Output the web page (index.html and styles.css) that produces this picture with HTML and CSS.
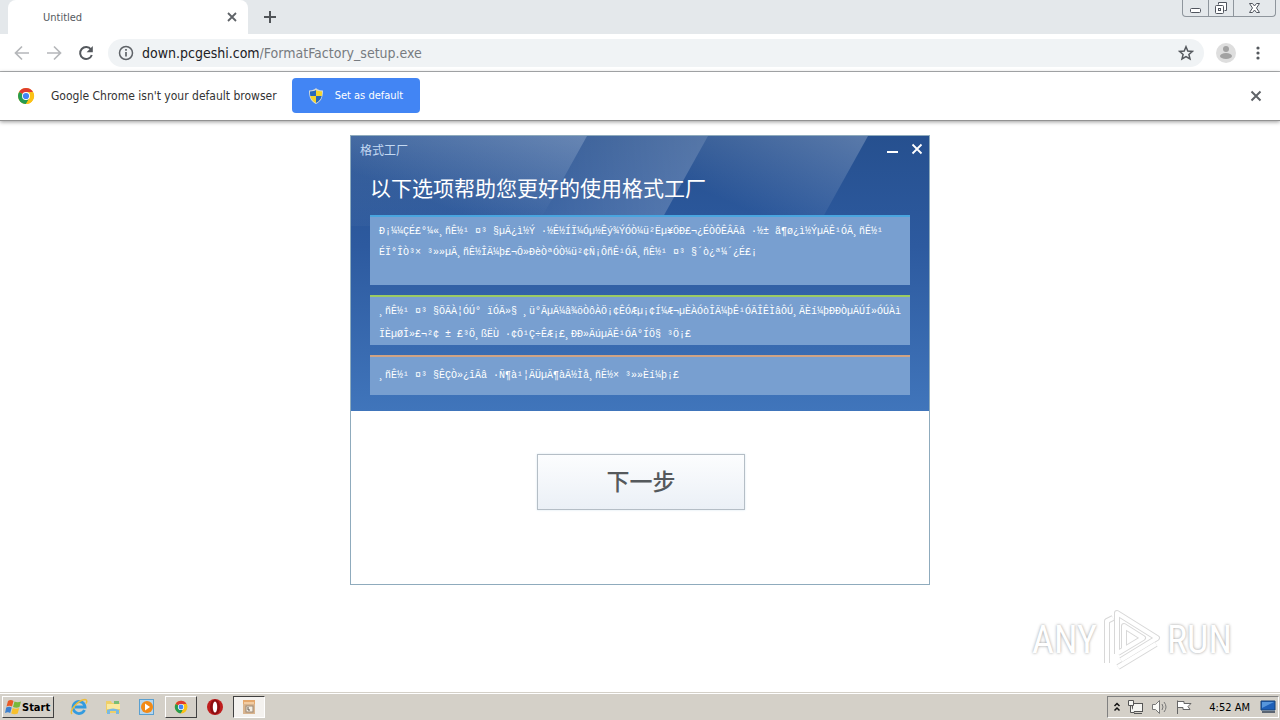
FILE: index.html
```html
<!DOCTYPE html>
<html lang="en">
<head>
    <meta charset="UTF-8">
    <meta name="viewport" content="width=device-width, initial-scale=1.0">
    <title>Untitled</title>
    <link rel="stylesheet" href="styles.css">
</head>
<body>
    <header class="browser">
        <div class="tab-strip">
            <div class="tab">
                <span class="tab-title">Untitled</span>
                <button class="icon-button" aria-label="Close tab">
                    <svg width="10" height="10" viewBox="0 0 10 10"><path d="M1 1l8 8M9 1L1 9" stroke="#5f6368" stroke-width="1.8"/></svg>
                </button>
            </div>
            <button class="icon-button new-tab" aria-label="New tab">
                <svg width="12" height="12" viewBox="0 0 12 12"><path d="M6 0v12M0 6h12" stroke="#505458" stroke-width="2"/></svg>
            </button>
            <div class="window-buttons">
                <button aria-label="Minimize window">
                    <svg width="13" height="16" viewBox="0 0 13 16"><rect x="1.5" y="8.5" width="10" height="4" rx="1" fill="#fff" stroke="#50555e"/></svg>
                </button>
                <button aria-label="Restore window">
                    <svg width="14" height="16" viewBox="0 0 14 16"><path d="M4.5 4.5v-2h8v8h-2" fill="#fff" stroke="#50555e"/><rect x="1.5" y="5.5" width="8" height="8" rx="1" fill="#fff" stroke="#50555e"/><rect x="4.5" y="8.5" width="2" height="2" fill="none" stroke="#50555e"/></svg>
                </button>
                <button class="wide" aria-label="Close window">
                    <svg width="13" height="16" viewBox="0 0 13 16"><path d="M1.5 3.500h3l2 2.500 2-2.500h3L8.500 8l3 4.500h-3l-2-2.500-2 2.500h-3L4.500 8z" fill="#fff" stroke="#50555e"/></svg>
                </button>
            </div>
        </div>

        <div class="toolbar">
            <button class="icon-button" aria-label="Back">
                <svg width="16" height="16" viewBox="0 0 16 16"><path d="M15 8H2M8 1.500L1.500 8 8 14.500" fill="none" stroke="#b5b7ba" stroke-width="1.7"/></svg>
            </button>
            <button class="icon-button" aria-label="Forward">
                <svg width="16" height="16" viewBox="0 0 16 16"><path d="M1 8h13M8 1.500L14.500 8 8 14.500" fill="none" stroke="#b5b7ba" stroke-width="1.7"/></svg>
            </button>
            <button class="icon-button" aria-label="Reload">
                <svg width="16" height="16" viewBox="0 0 16 16"><path d="M13 4.500A6 6 0 1 0 13.800 10" fill="none" stroke="#55595e" stroke-width="2"/><path d="M14.800 1v6.200H8.600z" fill="#55595e"/></svg>
            </button>
            <div class="address">
                <svg width="16" height="16" viewBox="0 0 16 16"><circle cx="8" cy="8" r="6.5" fill="none" stroke="#5f6368" stroke-width="1.5"/><path d="M8 7v4.500M8 4v1.700" stroke="#5f6368" stroke-width="1.7"/></svg>
                <label class="host" for="url">down.pcgeshi.com</label>
                <input class="path" id="url" type="text" value="/FormatFactory_setup.exe">
                <button class="icon-button" aria-label="Bookmark this page">
                    <svg width="16" height="16" viewBox="0 0 16 16"><path d="M8 1.700l1.800 4.300 4.600.4-3.500 3 1.100 4.500L8 11.500l-4 2.400 1.100-4.500-3.500-3 4.600-.4z" fill="none" stroke="#55595e" stroke-width="1.5"/></svg>
                </button>
            </div>
            <button class="icon-button profile" aria-label="Profile">
                <svg width="20" height="20" viewBox="0 0 20 20"><circle cx="10" cy="10" r="10" fill="#dedede"/><circle cx="10" cy="6" r="3" fill="#a2a2a2"/><ellipse cx="10" cy="13" rx="6" ry="3" fill="#a2a2a2"/></svg>
            </button>
            <button class="icon-button menu" aria-label="Menu">
                <svg width="4" height="14" viewBox="0 0 4 14" fill="#55595e"><circle cx="2" cy="2" r="1.6"/><circle cx="2" cy="7" r="1.6"/><circle cx="2" cy="12" r="1.6"/></svg>
            </button>
        </div>

        <div class="infobar">
            <svg width="18" height="18" viewBox="0 0 18 18"><use href="#chrome"/></svg>
            <span class="infobar-text">Google Chrome isn't your default browser</span>
            <button class="set-default">
                <svg width="14" height="16" viewBox="0 0 14 16"><path d="M7 0l1 1c2 1 4 1.500 6 1.500 0 7-2 11-7 13.500C2 13.500 0 9.500 0 2.500 2 2.500 4 2 6 1z" fill="#d6dbd5"/><path d="M7 2v6H1.300c-.3-1.300-.4-3-.3-4.500C3.500 3.400 5.500 3 7 2z" fill="#2868ba"/><path d="M7 2v6h5.700c.3-1.300.4-3 .3-4.500C10.500 3.400 8.500 3 7 2z" fill="#f4d52b"/><path d="M7 8v7c-3-1.500-5-4-5.700-7z" fill="#f4d52b"/><path d="M7 8v7c3-1.500 5-4 5.700-7z" fill="#2868ba"/></svg>
                Set as default
            </button>
            <button class="icon-button dismiss" aria-label="Dismiss">
                <svg width="12" height="12" viewBox="0 0 12 12"><path d="M1.500 1.500l9 9M10.500 1.500l-9 9" stroke="#5f6368" stroke-width="2"/></svg>
            </button>
        </div>
    </header>

    <main class="page">
        <section class="installer" lang="zh">
            <div class="hero">
                <svg class="rays" viewBox="0 0 578 275" preserveAspectRatio="none">
                    <defs>
                        <linearGradient id="ray" x1="0" y1="1" x2="1" y2="0">
                            <stop offset="0.3" stop-color="#fff" stop-opacity="0"/>
                            <stop offset="1" stop-color="#fff" stop-opacity="0.24"/>
                        </linearGradient>
                        <linearGradient id="haze" x1="0" y1="0" x2="1" y2="0">
                            <stop offset="0" stop-color="#fff" stop-opacity="0.08"/>
                            <stop offset="1" stop-color="#fff" stop-opacity="0.22"/>
                        </linearGradient>
                        <linearGradient id="shade" x1="0" y1="0" x2="0" y2="1">
                            <stop offset="0" stop-color="#4a70a8" stop-opacity="0.5"/>
                            <stop offset="1" stop-color="#4a70a8" stop-opacity="0.2"/>
                        </linearGradient>
                    </defs>
                    <path d="M0 0h236l-50 90H0z" fill="url(#shade)"/>
                    <path d="M0 0h236l-50 90H0z" fill="url(#ray)"/>
                    <path d="M236 0h121l-50 90H186z" fill="url(#haze)"/>
                    <path d="M357 0h160l-50 90H307z" fill="url(#ray)"/>
                </svg>
                <div class="title-bar">
                    <span class="title">格式工厂</span>
                    <button class="icon-button" aria-label="最小化">
                        <svg width="12" height="12" viewBox="0 0 12 12"><path d="M1 9h11" stroke="#fff" stroke-width="2"/></svg>
                    </button>
                    <button class="icon-button" aria-label="关闭">
                        <svg width="12" height="12" viewBox="0 0 12 12"><path d="M1.500 1.500l9 9M10.500 1.500l-9 9" stroke="#fff" stroke-width="1.8"/></svg>
                    </button>
                </div>
                <h1>以下选项帮助您更好的使用格式工厂</h1>
                <div class="option blue">
                    <p>Ð¡¼¼ÇÉ£°¼«¸ñÊ½¹ ¤³ §µÄ¿ì½Ý ·½Ê½ÍÏ¼Óµ½Êý¾ÝÓÒ¼ü²Ëµ¥ÖÐ£¬¿ÉÒÔÊÂÃâ ·½± ã¶ø¿ì½ÝµÄÊ¹ÓÃ¸ñÊ½¹</p>
                    <p>ÉÏ°ÎÒ³× ³»»µÄ¸ñÊ½ÎÄ¼þ£¬Õ»ÐèÒªÓÒ¼ü²¢Ñ¡ÔñÊ¹ÓÃ¸ñÊ½¹ ¤³ §´ò¿ª¼´¿É£¡</p>
                </div>
                <div class="option green">
                    <p>¸ñÊ½¹ ¤³ §ÕÃÀ¦ÓÚ° ïÓÃ»§ ¸ü°ÃµÄ¼â¾öÒôÀÖ¡¢ÊÓÆµ¡¢Í¼Æ¬µÈÀ­ÓòÎÄ¼þÊ¹ÓÃÎÊÌâÔÚ¸ÃÈí¼þÐÐÒµÄÚÍ»ÓÚÀì</p>
                    <p>ÏÈµØÎ»£¬²¢ ± £³Ö¸ßËÙ ·¢Õ¹Ç÷ÊÆ¡£¸ÐÐ»ÄúµÄÊ¹ÓÃ°ÍÖ§ ³Ö¡£</p>
                </div>
                <div class="option orange">
                    <p>¸ñÊ½¹ ¤³ §ÊÇÒ»¿îÃâ ·Ñ¶à¹¦ÄÜµÄ¶àÃ½Ìå¸ñÊ½× ³»»Èí¼þ¡£</p>
                </div>
            </div>
            <div class="actions">
                <button class="next">下一步</button>
            </div>
        </section>
        <div class="watermark">
            <span>ANY</span>
            <svg width="58" height="62" viewBox="0 0 58 62" fill="none" stroke-linejoin="round"><g stroke="#d8d8d8" stroke-width="6"><path d="M4 54V12l6-3M14 45V4l40 25-36 22"/><path d="M21 40V17l19 12-25 15M15 58l38-23"/></g><g stroke="#fff" stroke-width="4"><path d="M4 54V12l6-3M14 45V4l40 25-36 22"/><path d="M21 40V17l19 12-25 15M15 58l38-23"/></g></svg>
            <span>RUN</span>
        </div>
    </main>

    <footer class="taskbar">
        <button class="start">
            <svg width="17" height="16" viewBox="0 0 17 16"><path d="M3 2c2-1.500 4-1 5.500 0L7 7.500C5.500 6.500 3.500 6.500 1.500 7.500z" fill="#e95a26"/><path d="M9.500 2.500c2 1 4 1 6.500 0L14.500 8c-2 1-4 1-6.500 0z" fill="#78b83b"/><path d="M1.200 8.500c2-1 4-1 5.500 0L5.200 14c-1.500-1-3.200-1-5.200 0z" fill="#3c80cf"/><path d="M7.700 9c2 1 4 1 6.500 0l-1.500 5.500c-2 1-4 1-6.500 0z" fill="#f8c02c"/></svg>
            Start
        </button>
        <button class="task" aria-label="Internet Explorer">
            <svg width="18" height="18" viewBox="0 0 18 18"><path d="M14.500 12A6 6 0 1 1 15 9H5" fill="none" stroke="#339bdf" stroke-width="2.8"/><path d="M2 16C-1 13 8 2 15 1.500c3 .5 1.500 3 1 4" fill="none" stroke="#edbd3b" stroke-width="1.5"/></svg>
        </button>
        <button class="task" aria-label="Windows Explorer">
            <svg width="18" height="18" viewBox="0 0 18 18"><path d="M2 3h5l1 2h8v10H2z" fill="#efcf68"/><path d="M3 6h13v5H3z" fill="#fae99f"/><path d="M10 3h5v3h-5z" fill="#79bd75"/><path d="M3 16v-4q6-3 12 0v4h-3v-3H6v3z" fill="#79b9e2"/></svg>
        </button>
        <button class="task" aria-label="Media Player">
            <svg width="18" height="18" viewBox="0 0 18 18"><rect x="1.5" y="1.5" width="14" height="15" fill="#b6d6ee" stroke="#5aa0d0"/><circle cx="9" cy="9" r="6" fill="#f28a17"/><path d="M7 5.500v7l5-3.500z" fill="#fff"/></svg>
        </button>
        <button class="task raised" aria-label="Google Chrome">
            <svg width="14" height="14" viewBox="0 0 18 18">
                <g id="chrome"><circle cx="9" cy="9" r="8" fill="#fbc116"/><path d="M9 9L2.100 5A8 8 0 0 1 16 5z" fill="#df3c30"/><path d="M9 9L2.100 5A8 8 0 0 0 9 17l3.500-6z" fill="#259b50"/><path d="M9 5h7a8 8 0 0 1-7 12l3.500-6z" fill="#fbc116"/><circle cx="9" cy="9" r="4" fill="#fff"/><circle cx="9" cy="9" r="3.1" fill="#4285f4"/></g>
            </svg>
        </button>
        <button class="task" aria-label="Opera">
            <svg width="18" height="18" viewBox="0 0 18 18"><circle cx="9" cy="9" r="8" fill="#bf1d1d"/><ellipse cx="9" cy="9" rx="5" ry="7.5" fill="#8e0d10"/><ellipse cx="9" cy="9" rx="2.2" ry="5.5" fill="#fff"/></svg>
        </button>
        <button class="task pressed" aria-label="格式工厂">
            <svg width="16" height="16" viewBox="0 0 16 16"><path d="M2 1h12v14H2z" fill="#d9b58f"/><path d="M2 1h12v4H2z" fill="#e5a86c"/><path d="M3 4h10" stroke="#fff0d9"/><rect x="5" y="7" width="7" height="6" fill="#f3eee3" stroke="#9d8976"/><path d="M7 8v3h2" stroke="#62564e" fill="none"/></svg>
        </button>
        <div class="tray">
            <svg width="8" height="12" viewBox="0 0 8 12" fill="none" stroke="#111" stroke-width="1.5"><path d="M1.500 5L4 2.500 6.500 5M1.500 9.500L4 7l2.500 2.500"/></svg>
            <svg width="18" height="16" viewBox="0 0 18 16" fill="#f5f5f2" stroke="#555"><rect x="5.5" y="4.5" width="10" height="8"/><path d="M7 14.500h8"/><path d="M1.500 1.500h5v5h-5zM3.500 6.500v7h4"/></svg>
            <svg width="18" height="16" viewBox="0 0 18 16" fill="none" stroke="#777"><path d="M1.500 5.500h3l4-4v13l-4-4h-3z" fill="#fafaf7"/><path d="M11 5q2 3 0 6M13 3q4 5 0 10"/></svg>
            <svg width="18" height="16" viewBox="0 0 18 16"><path d="M2.500 15V1.500M3 2.500h6v2h7l-3 3 2 3H8v-2H3" fill="#fff" stroke="#666"/></svg>
            <time>4:52 AM</time>
            <svg width="18" height="14" viewBox="0 0 18 14"><path d="M2 1h14v9H2z" fill="#1e60b8" stroke="#174276"/><path d="M3 2h12L3 8z" fill="#5797dc"/><path d="M3 12h13" stroke="#5b6572" stroke-width="2"/></svg>
        </div>
    </footer>
</body>
</html>
```

FILE: styles.css
```css
* {
    box-sizing: border-box;
}

body {
    display: flex;
    flex-direction: column;
    min-height: 100vh;
    margin: 0;
    background-color: #fff;
    font-family: "DejaVu Sans Condensed", "DejaVu Sans", sans-serif;
    font-size: 12px;
    color: #333;
}

svg {
    display: block;
    flex-shrink: 0;
}

button {
    margin: 0;
    padding: 0;
    border: none;
    background: none;
    font: inherit;
    color: inherit;
    cursor: pointer;
}

.icon-button {
    display: flex;
    align-items: center;
    justify-content: center;
}

/* browser frame */
.tab-strip {
    display: flex;
    height: 34px;
    padding-left: 8px;
    background-color: #e4e8eb;
}

.tab {
    display: flex;
    align-items: center;
    justify-content: space-between;
    width: 240px;
    padding: 0 11px 0 35px;
    border-radius: 8px 8px 0 0;
    background-color: #fff;
}

.tab-title {
    font-size: 11px;
    color: #55595e;
}

.new-tab {
    width: 44px;
}

.window-buttons {
    display: flex;
    height: 17px;
    margin-left: auto;
    margin-right: 4px;
    border: 1px solid #8e959c;
    border-top: none;
    border-radius: 0 0 4px 4px;
}

.window-buttons button {
    display: flex;
    justify-content: center;
    width: 25px;
}

.window-buttons button + button {
    border-left: 1px solid #8e959c;
}

.window-buttons .wide {
    width: 42px;
}

.toolbar {
    display: flex;
    align-items: center;
    gap: 16px;
    height: 38px;
    padding: 0 20px 0 14px;
    border-bottom: 1px solid #b0b2b4;
}

.address {
    display: flex;
    flex: 1;
    align-items: center;
    height: 28px;
    margin-left: -2px;
    padding: 0 10px;
    border-radius: 14px;
    background-color: #f0f3f5;
    font-size: 14px;
}

.host {
    margin-left: 8px;
    color: #202124;
}

.path {
    flex: 1;
    min-width: 0;
    padding: 0;
    border: none;
    outline: none;
    background: none;
    font: inherit;
    color: #777b80;
}

.profile {
    margin-left: -4px;
}

.menu {
    margin-left: 4px;
}

.infobar {
    display: flex;
    align-items: center;
    height: 49px;
    padding: 0 18px 1px 17px;
    border-bottom: 1px solid #929292;
    box-shadow: 0 1px 4px rgba(0, 0, 0, 0.4);
}

.infobar-text {
    margin: 0 15px 0 16px;
}

.set-default {
    display: flex;
    align-items: center;
    gap: 12px;
    height: 35px;
    padding: 0 17px;
    border-radius: 4px;
    background-color: #4285f4;
    font-size: 11px;
    color: #fff;
}

.dismiss {
    margin-left: auto;
}

/* installer window */
.page {
    position: relative;
    flex: 1;
    padding-top: 14px;
}

.installer {
    width: 580px;
    margin: 0 auto;
    border: 1px solid #8fabbd;
    font-family: "Noto Sans CJK SC", sans-serif;
}

.hero {
    position: relative;
    padding: 0 19px 16px;
    background: linear-gradient(#26508f, #2d5a9f 40%, #4075bb);
    color: #fff;
}

.rays {
    position: absolute;
    inset: 0;
    width: 100%;
    height: 100%;
}

.title-bar {
    position: relative;
    display: flex;
    align-items: center;
    gap: 13px;
    height: 26px;
    margin: 0 -13px 0 -10px;
}

.title {
    margin-right: auto;
    color: #c4d9f2;
}

.hero h1 {
    position: relative;
    height: 53px;
    margin: 0;
    font-size: 21px;
    font-weight: 400;
    line-height: 50px;
}

.option {
    position: relative;
    margin-bottom: 10px;
    padding: 4px 0 0 9px;
    border-top: 2px solid #49a5df;
    background-color: #789fd0;
    font-family: "Liberation Mono", monospace;
    font-size: 10px;
    white-space: nowrap;
}

.option:last-child {
    margin-bottom: 0;
}

.option p {
    margin: 0;
}

.blue {
    height: 70px;
    line-height: 21px;
}

.green {
    height: 50px;
    padding-top: 3px;
    border-top-color: #9ccb62;
    line-height: 23px;
}

.orange {
    height: 40px;
    padding-top: 8px;
    border-top-color: #d0a384;
    line-height: 21px;
}

.actions {
    display: flex;
    justify-content: center;
    padding: 43px 0 74px 2px;
}

.next {
    width: 208px;
    height: 56px;
    padding-bottom: 4px;
    border: 1px solid #b5bec6;
    background: linear-gradient(#fcfdfe, #ebf0f6);
    box-shadow: 0 0 2px #d5e5ef;
    font-size: 23px;
    font-weight: 500;
    color: #55595c;
}

.watermark {
    position: absolute;
    right: 48px;
    bottom: 21px;
    display: flex;
    align-items: center;
    gap: 6px;
    font-family: "Roboto Condensed", Roboto, sans-serif;
    font-size: 38px;
    color: #fff;
    text-shadow: 0 0 3px #999;
}

/* taskbar */
.taskbar {
    display: flex;
    align-items: center;
    height: 28px;
    padding: 1px 1px 0 2px;
    border-top: 1px solid #d4d0c8;
    background-color: #d4d0c8;
    box-shadow: inset 0 1px #fff;
    font-size: 11px;
    color: #000;
}

.start {
    display: flex;
    align-items: center;
    height: 22px;
    margin-right: 9px;
    padding: 0 3px 0 2px;
    border: 1px solid;
    border-color: #fff #404040 #404040 #fff;
    font-weight: bold;
}

.task {
    display: flex;
    align-items: center;
    justify-content: center;
    width: 32px;
    height: 22px;
    margin-right: 2px;
}

.raised {
    border: 1px solid;
    border-color: #fff #404040 #404040 #fff;
}

.pressed {
    border: 1px solid;
    border-color: #404040 #fff #fff #404040;
    background-color: #f4f2ef;
}

.tray {
    display: flex;
    align-items: center;
    gap: 6px;
    height: 22px;
    margin-left: auto;
    padding: 0 1px 0 5px;
    border: 1px solid;
    border-color: #808080 #fff #fff #808080;
}

.tray time {
    margin: 0 3px 0 10px;
}
```
